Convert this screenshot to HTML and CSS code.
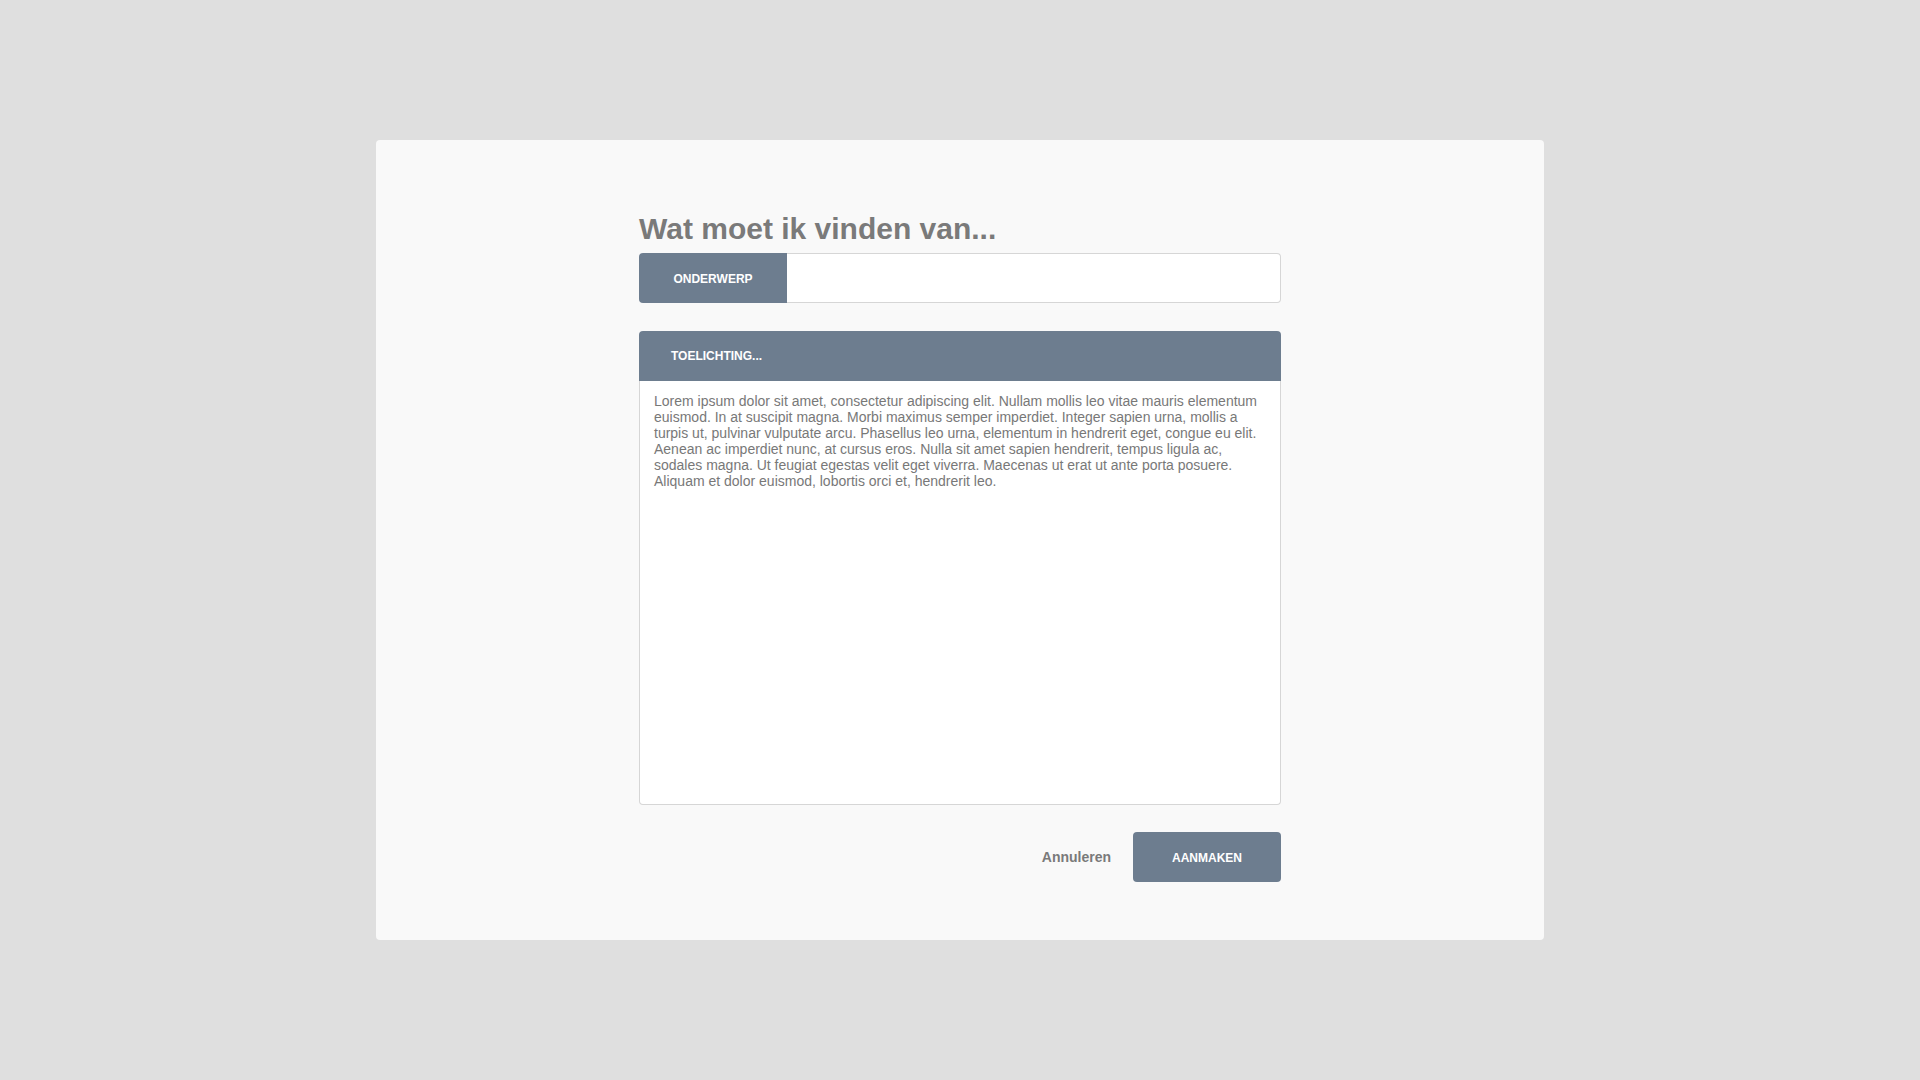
FILE: index.html
```html
<!DOCTYPE html>
<html lang="nl">
<head>
<meta charset="utf-8">
<title>Wat moet ik vinden van...</title>
<link rel="stylesheet" href="styles.css">
</head>
<body>
<div class="dialog">
  <div class="content">
    <h1 class="title">Wat moet ik vinden van...</h1>
    <div class="subject-row">
      <div class="subject-label">ONDERWERP</div>
      <div class="subject-input"></div>
    </div>
    <div class="note">
      <div class="note-header">TOELICHTING...</div>
      <div class="note-body">Lorem ipsum dolor sit amet, consectetur adipiscing elit. Nullam mollis leo vitae mauris elementum euismod. In at suscipit magna. Morbi maximus semper imperdiet. Integer sapien urna, mollis a turpis ut, pulvinar vulputate arcu. Phasellus leo urna, elementum in hendrerit eget, congue eu elit. Aenean ac imperdiet nunc, at cursus eros. Nulla sit amet sapien hendrerit, tempus ligula ac, sodales magna. Ut feugiat egestas velit eget viverra. Maecenas ut erat ut ante porta posuere. Aliquam et dolor euismod, lobortis orci et, hendrerit leo.</div>
    </div>
    <div class="actions">
      <span class="cancel">Annuleren</span>
      <span class="create">AANMAKEN</span>
    </div>
  </div>
</div>
</body>
</html>
```
FILE: styles.css
```css
html, body {
  margin: 0;
  padding: 0;
}
body {
  background: #dfdfdf;
  height: 100vh;
  display: flex;
  align-items: center;
  justify-content: center;
  font-family: "Liberation Sans", Arial, sans-serif;
}
.dialog {
  width: 1168px;
  height: 800px;
  box-sizing: border-box;
  background: #f9f9f9;
  border-radius: 4px;
  padding: 72px 0 58px;
  display: flex;
  flex-direction: column;
  align-items: center;
}
.content {
  width: 642px;
}
.title {
  margin: 0 0 7px;
  font-size: 30px;
  line-height: 34px;
  font-weight: 700;
  color: #7a7a7a;
}
.subject-row {
  display: flex;
  height: 50px;
}
.subject-label {
  width: 148px;
  background: #6d7d8f;
  color: #ffffff;
  font-size: 12px;
  font-weight: 700;
  display: flex;
  align-items: center;
  justify-content: center;
  padding-top: 1px;
  box-sizing: border-box;
  border-radius: 4px 0 0 4px;
}
.subject-input {
  flex: 1;
  background: #ffffff;
  border: 1px solid #d6d6d6;
  border-left: none;
  border-radius: 0 4px 4px 0;
}
.note {
  margin-top: 28px;
}
.note-header {
  height: 50px;
  background: #6d7d8f;
  color: #ffffff;
  font-size: 12px;
  font-weight: 700;
  display: flex;
  align-items: center;
  padding-left: 32px;
  border-radius: 4px 4px 0 0;
}
.note-body {
  height: 424px;
  box-sizing: border-box;
  background: #ffffff;
  border: 1px solid #d6d6d6;
  border-top: none;
  border-radius: 0 0 4px 4px;
  padding: 12px 14px;
  color: #787878;
  font-size: 14px;
  line-height: 16px;
}
.actions {
  margin-top: 27px;
  display: flex;
  justify-content: flex-end;
  align-items: center;
  gap: 22px;
}
.cancel {
  font-size: 14px;
  font-weight: 700;
  color: #7a7a7a;
}
.create {
  width: 148px;
  height: 50px;
  box-sizing: border-box;
  padding-top: 1px;
  background: #6d7d8f;
  color: #ffffff;
  font-size: 12px;
  font-weight: 700;
  border-radius: 4px;
  display: flex;
  align-items: center;
  justify-content: center;
}
```
